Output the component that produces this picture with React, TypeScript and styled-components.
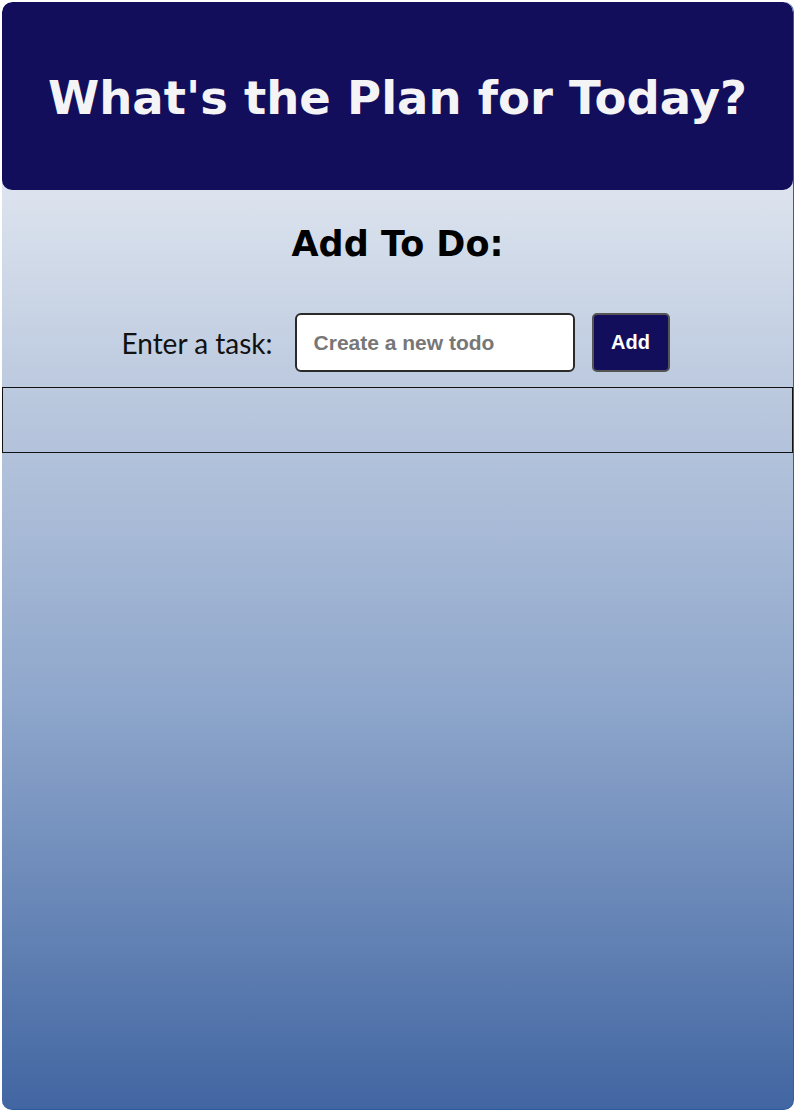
import React from "react";
import styled, { createGlobalStyle } from "styled-components";

const Global = createGlobalStyle`
  html, body { margin: 0; padding: 0; background: #ffffff; }
  body { font-family: "Lato", "Open Sans", sans-serif; }
`;

const Card = styled.div`
  margin: 2px 6px 0 2px;
  width: 792px;
  height: 1108px;
  border-radius: 10px;
  background: linear-gradient(180deg, #e8ecf4 0%, #dce3ee 17%, #bac8de 36%, #8fa7cc 63%, #4266a2 100%);
  border-right: 1px solid #2f5fa6;
  border-bottom: 1px solid #2b5a9e;
  box-sizing: border-box;
  display: flex;
  flex-direction: column;
  overflow: hidden;
`;

const Header = styled.header`
  height: 188px;
  background: #130e5c;
  border-radius: 10px;
  display: flex;
  align-items: center;
  justify-content: center;
  padding-top: 4px;
  box-sizing: border-box;
`;

const Title = styled.h1`
  margin: 0;
  color: #f4f4f6;
  font-family: "DejaVu Sans", sans-serif;
  font-weight: 700;
  font-size: 46.5px;
  line-height: 1;
`;

const Subtitle = styled.h2`
  margin: 37px 0 0;
  text-align: center;
  font-family: "DejaVu Sans", sans-serif;
  font-weight: 700;
  font-size: 35px;
  color: #000;
  line-height: 1;
`;

const Form = styled.form`
  display: flex;
  align-items: center;
  justify-content: center;
  margin-top: 51px;
  padding-right: 4px;
`;

const Label = styled.label`
  font-family: "Lato", sans-serif;
  font-size: 28px;
  color: #111;
  margin-right: 22px;
`;

const Input = styled.input`
  width: 280px;
  height: 59px;
  box-sizing: border-box;
  border: 2px solid #2a2a2a;
  border-radius: 6px;
  background: #fff;
  padding: 0 17px;
  font-family: "Liberation Sans", Arial, sans-serif;
  font-size: 21px;
  font-weight: 700;
  outline: none;
  &::placeholder { color: #777; }
`;

const Button = styled.button`
  margin-left: 17px;
  width: 78px;
  height: 59px;
  box-sizing: border-box;
  background: #130e5c;
  border: 2px solid #555;
  border-radius: 5px;
  color: #fff;
  font-family: "Liberation Sans", Arial, sans-serif;
  font-size: 20px;
  font-weight: 700;
`;

const List = styled.ul`
  margin: 15px 0 0;
  padding: 0;
  height: 66px;
  box-sizing: border-box;
  border: 1px solid #111;
  list-style: none;
`;

export default function App() {
  return (
    <>
      <Global />
      <Card>
        <Header>
          <Title>What's the Plan for Today?</Title>
        </Header>
        <Subtitle>Add To Do:</Subtitle>
        <Form onSubmit={(e) => e.preventDefault()}>
          <Label>Enter a task:</Label>
          <Input placeholder="Create a new todo" />
          <Button type="submit">Add</Button>
        </Form>
        <List />
      </Card>
    </>
  );
}
